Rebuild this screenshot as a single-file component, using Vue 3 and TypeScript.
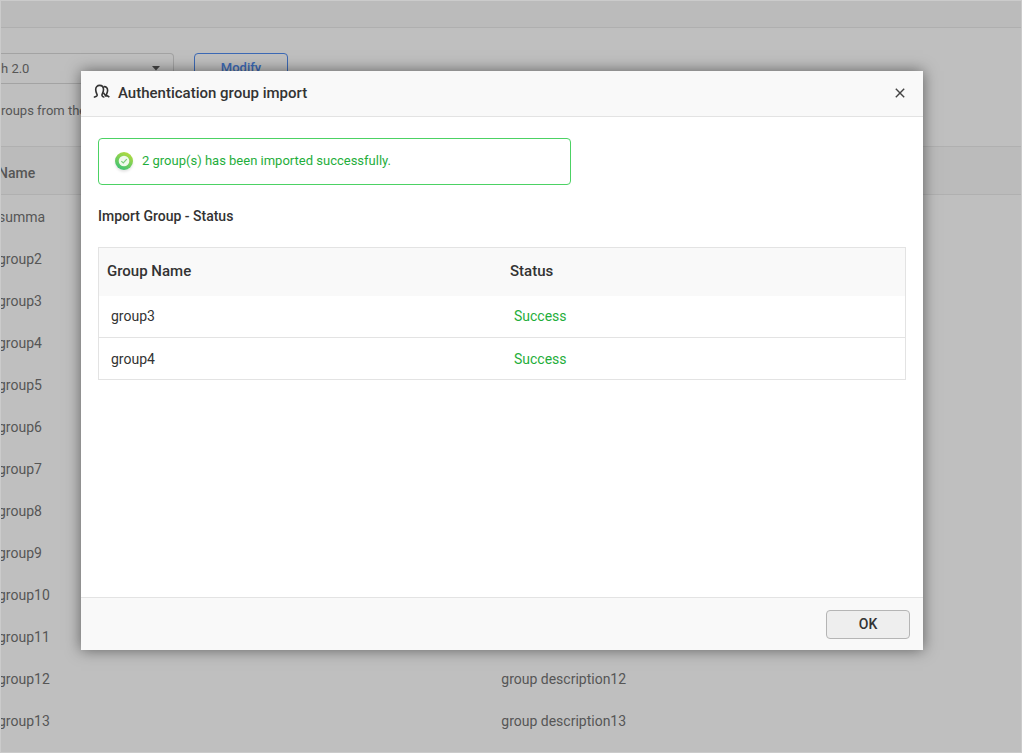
<script setup lang="ts">
import { ref } from 'vue'

interface Group {
  name: string
  description: string
}

interface ImportResult {
  name: string
  status: string
}

const groups: Group[] = [
  { name: 'summa', description: '' },
  ...Array.from({ length: 12 }, (_, i) => ({
    name: `group${i + 2}`,
    description: `group description${i + 2}`,
  })),
]

const results: ImportResult[] = [
  { name: 'group3', status: 'Success' },
  { name: 'group4', status: 'Success' },
]

const open = ref(true)
const close = () => {
  open.value = false
}
</script>

<template>
  <div class="screen">
    <main class="page" :inert="open">
      <div class="topbar"></div>
      <div class="toolbar">
        <div class="picker">
          <select aria-label="h 2.0">
            <option>h 2.0</option>
          </select>
          <svg class="caret" viewBox="0 0 8 5" aria-hidden="true"><path d="M0 0h8L4 4.5z" /></svg>
        </div>
        <button type="button" class="modify">Modify</button>
      </div>
      <p class="hint">roups from the</p>
      <div class="groups">
        <table>
          <thead>
            <tr>
              <th scope="col">Name</th>
              <td></td>
            </tr>
          </thead>
          <tbody>
            <tr v-for="group in groups" :key="group.name">
              <td>{{ group.name }}</td>
              <td>{{ group.description }}</td>
            </tr>
          </tbody>
        </table>
      </div>
    </main>

    <div v-if="open" class="overlay">
      <section class="dialog" role="dialog" aria-modal="true" aria-labelledby="dialog-title">
        <header class="dialog-head">
          <svg class="people" viewBox="0 0 18 16" aria-hidden="true">
            <path d="M.8 13.200C2.600 13 4 12.300 4.200 11.200 4.300 10.300 2.700 8.700 2.700 5.600 2.700 3 4.400 1.400 6.600 1.400s3.900 1.600 3.900 4.200c0 3.100-1.700 4.500-1.600 5.600.1 1.100 1.300 1.700 2.500 2" />
            <path d="M10.600 2.700c2.300-.5 4 1 4 3.500 0 2.600-1.300 3.700-1.200 4.600.1.900 1.700 1.200 2.900 2.400M10.400 8.800l2.800 3.600" />
          </svg>
          <h1 id="dialog-title">Authentication group import</h1>
          <button type="button" class="close" aria-label="Close" @click="close">
            <svg viewBox="0 0 10 10" aria-hidden="true"><path d="M.8.8l8.400 8.400M9.200.8L.8 9.200" /></svg>
          </button>
        </header>

        <div class="dialog-body">
          <div class="notice" role="status">
            <svg class="ok-icon" viewBox="0 0 24 24" aria-hidden="true">
              <defs>
                <linearGradient id="ring" x1="0.8" y1="0" x2="0.3" y2="1">
                  <stop offset="0" stop-color="#b9dc3c" />
                  <stop offset="1" stop-color="#3cc274" />
                </linearGradient>
              </defs>
              <circle cx="12" cy="12" r="9" fill="url(#ring)" />
              <circle cx="12" cy="12" r="5.300" fill="#f0f9ec" />
              <path d="M9.300 12.100l2 1.900 3.500-3.800" fill="none" stroke="#7ccf7c" stroke-width="1.200" />
            </svg>
            <span>2 group(s) has been imported successfully.</span>
          </div>

          <h2>Import Group - Status</h2>

          <table class="results">
            <thead>
              <tr>
                <th scope="col">Group Name</th>
                <th scope="col">Status</th>
              </tr>
            </thead>
            <tbody>
              <tr v-for="result in results" :key="result.name">
                <td>{{ result.name }}</td>
                <td class="success">{{ result.status }}</td>
              </tr>
            </tbody>
          </table>
        </div>

        <footer class="dialog-foot">
          <button type="button" class="ok" @click="close">OK</button>
        </footer>
      </section>
    </div>
  </div>
</template>

<style>
body {
  margin: 0;
}
</style>

<style scoped>
.screen,
.screen * {
  box-sizing: border-box;
}

.screen {
  position: relative;
  height: 100vh;
  overflow: hidden;
  border: 1px solid #cbcbcb;
  background: #bfbfbf;
  color: #333;
  font: 14px/20px Roboto, "Liberation Sans", sans-serif;
}

button,
select {
  font: inherit;
}

table {
  width: 100%;
  border-collapse: collapse;
  table-layout: fixed;
}

th {
  font-weight: 500;
  text-align: left;
}

.page {
  color: #565656;
}

.topbar {
  height: 27px;
  border-bottom: 1px solid #afafaf;
  background: #bbb;
}

.toolbar {
  display: flex;
  gap: 20px;
  padding-top: 25px;
  font-size: 13px;
}

.picker {
  display: grid;
  align-items: center;
  width: 173px;
}

.picker > * {
  grid-area: 1 / 1;
}

.picker select {
  width: 100%;
  height: 31px;
  padding: 0;
  border: 1px solid #a3a3a3;
  border-left: 0;
  border-radius: 0 4px 4px 0;
  background: transparent;
  color: inherit;
  appearance: none;
  opacity: 1;
}

.caret {
  justify-self: end;
  width: 8px;
  height: 5px;
  margin-right: 14px;
  fill: #444;
  pointer-events: none;
}

.modify {
  width: 94px;
  height: 31px;
  padding: 0 0 2px;
  border: 1px solid #3c69b5;
  border-radius: 4px;
  background: transparent;
  color: #3c69b5;
  font-weight: 500;
}

.hint {
  margin: 17px 0 25px;
  font-size: 13px;
}

.groups {
  margin-left: -3px;
}

.groups th,
.groups td {
  height: 42px;
  padding: 2px 0 0;
}

.groups thead tr {
  border: solid #b0b0b0;
  border-width: 1px 0;
  background: #bbb;
}

.groups thead th {
  height: 48px;
  padding-top: 4px;
}

.groups td:last-child {
  width: 51%;
  padding-left: 2px;
}

.overlay {
  position: absolute;
  inset: 0;
  display: flex;
  padding: 70px 98px 102px 80px;
}

.dialog {
  display: flex;
  flex: 1;
  flex-direction: column;
  background: #fff;
  box-shadow: 0 0 14px rgba(0, 0, 0, 0.5);
}

.dialog-head {
  display: flex;
  align-items: center;
  height: 46px;
  padding: 0 17px 2px 12px;
  border-bottom: 1px solid #e3e3e3;
  background: #f9f9f9;
}

.people {
  width: 18px;
  height: 18px;
  margin-right: 7px;
  padding-bottom: 2px;
  fill: none;
  stroke: #333;
  stroke-width: 1.6;
}

h1,
h2 {
  margin: 0;
  font-weight: 500;
}

h1 {
  font-size: 15px;
}

.close {
  display: flex;
  margin-left: auto;
  padding: 0;
  border: 0;
  background: transparent;
}

.close svg {
  width: 12px;
  height: 10px;
  fill: none;
  stroke: #444;
  stroke-width: 1.4;
}

.dialog-body {
  flex: 1;
  padding: 21px 17px;
}

.notice {
  display: flex;
  align-items: center;
  gap: 6px;
  max-width: 473px;
  height: 47px;
  padding: 0 13px 2px;
  border: 1px solid #4cd264;
  border-radius: 4px;
  color: #1fae3b;
  font-size: 13px;
}

.ok-icon {
  width: 24px;
  height: 24px;
  filter: drop-shadow(0 2px 1px rgba(0, 0, 0, 0.1));
}

h2 {
  margin: 21px 0;
  font-size: 14px;
}

.results {
  border: 1px solid #e3e3e3;
}

.results th {
  height: 48px;
  padding: 0 8px 2px;
  background: #f9f9f9;
  font-size: 15px;
}

.results td {
  height: 42px;
  padding: 0 12px;
}

.results tbody tr + tr {
  border-top: 1px solid #e3e3e3;
}

.results .success {
  color: #1fae3b;
}

.dialog-foot {
  display: flex;
  justify-content: flex-end;
  padding: 12px 13px 11px;
  border-top: 1px solid #e3e3e3;
  background: #f9f9f9;
}

.ok {
  width: 84px;
  height: 29px;
  padding: 0 0 2px;
  border: 1px solid #b5b5b5;
  border-radius: 4px;
  background: #eee;
  color: #333;
  font-weight: 500;
}
</style>
